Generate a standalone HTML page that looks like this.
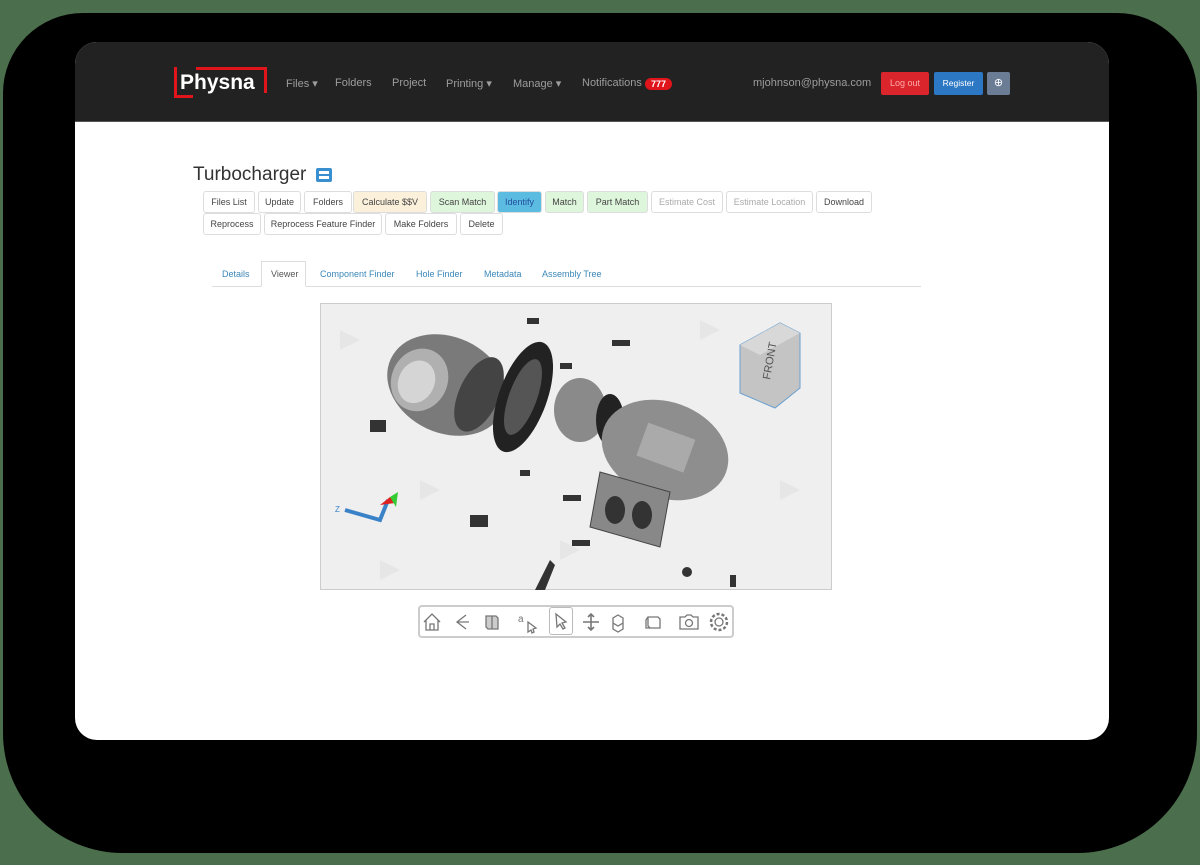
<!DOCTYPE html>
<html><head><meta charset="utf-8"><style>
*{margin:0;padding:0;box-sizing:border-box}
body{width:1200px;height:865px;background:#4b6f4c;position:relative;overflow:hidden;font-family:"Liberation Sans",sans-serif}
.frame{position:absolute;left:3px;top:13px;width:1194px;height:840px;background:#000;border-radius:80px 80px 120px 120px}
.card{position:absolute;left:75px;top:42px;width:1034px;height:698px;background:#fff;border-radius:22px;overflow:hidden}
.nav{position:absolute;left:0;top:0;width:100%;height:80px;background:#222;border-bottom:1px solid #555}
.nav .a{position:absolute;top:35px;color:#9d9d9d;font-size:11px}
.btn{position:absolute;height:22px;border:1px solid #ddd;border-radius:3px;font-size:9px;color:#444;line-height:20px;text-align:center;background:#fff;white-space:nowrap}
.tab{position:absolute;top:227px;font-size:9px;color:#3a87b8}
</style></head><body>
<div class="frame"></div>
<div class="card">
 <div class="nav">
  <div style="position:absolute;left:99px;top:25px;width:3px;height:31px;background:#e0141b"></div>
  <div style="position:absolute;left:99px;top:53px;width:19px;height:3px;background:#e0141b"></div>
  <div style="position:absolute;left:121px;top:25px;width:71px;height:3px;background:#e0141b"></div>
  <div style="position:absolute;left:189px;top:25px;width:3px;height:26px;background:#e0141b"></div>
  <div style="position:absolute;left:105px;top:29px;color:#fff;font-weight:bold;font-size:21px">Physna</div>
  <div class="a" style="left:211px">Files ▾</div>
  <div class="a" style="left:260px">Folders</div>
  <div class="a" style="left:317px">Project</div>
  <div class="a" style="left:371px">Printing ▾</div>
  <div class="a" style="left:438px">Manage ▾</div>
  <div class="a" style="left:507px">Notifications</div>
  <div style="position:absolute;left:570px;top:36px;width:27px;height:12px;background:#e0141b;border-radius:6px;color:#fff;font-size:9px;text-align:center;line-height:12px;font-weight:bold">777</div>
  <div class="a" style="left:678px;top:35px">mjohnson@physna.com</div>
  <div style="position:absolute;left:806px;top:30px;width:48px;height:23px;background:#d9252b;font-size:9px;text-align:center;line-height:23px;border-radius:2px;color:#faa">Log out</div>
  <div style="position:absolute;left:859px;top:30px;width:49px;height:23px;background:#2d78c4;color:#fff;font-size:8.5px;text-align:center;line-height:23px;border-radius:2px">Register</div>
  <div style="position:absolute;left:912px;top:30px;width:23px;height:23px;background:#6b7d95;border-radius:2px;color:#fff;font-size:11px;text-align:center;line-height:23px">⊕</div>
 </div>
 <div style="position:absolute;left:118px;top:122px;font-size:19px;color:#333">Turbocharger</div>
 <div style="position:absolute;left:241px;top:126px;width:16px;height:14px;background:#3a8fd0;border-radius:2px"><div style="margin:3px 3px;width:10px;height:3px;background:#fff"></div><div style="margin:-1px 3px;width:10px;height:3px;background:#fff"></div></div>
 <div class="btn" style="left:128px;top:149px;width:52px">Files List</div>
 <div class="btn" style="left:183px;top:149px;width:43px">Update</div>
 <div class="btn" style="left:229px;top:149px;width:48px">Folders</div>
 <div class="btn" style="left:278px;top:149px;width:74px;background:#fbf1db">Calculate $$V</div>
 <div class="btn" style="left:355px;top:149px;width:65px;background:#def6dc">Scan Match</div>
 <div class="btn" style="left:422px;top:149px;width:45px;background:#5bbbe0;color:#2250a0">Identify</div>
 <div class="btn" style="left:470px;top:149px;width:39px;background:#def6dc">Match</div>
 <div class="btn" style="left:512px;top:149px;width:61px;background:#def6dc">Part Match</div>
 <div class="btn" style="left:576px;top:149px;width:72px;color:#aaa">Estimate Cost</div>
 <div class="btn" style="left:651px;top:149px;width:87px;color:#aaa">Estimate Location</div>
 <div class="btn" style="left:741px;top:149px;width:56px">Download</div>
 <div class="btn" style="left:128px;top:171px;width:58px">Reprocess</div>
 <div class="btn" style="left:189px;top:171px;width:118px">Reprocess Feature Finder</div>
 <div class="btn" style="left:310px;top:171px;width:72px">Make Folders</div>
 <div class="btn" style="left:385px;top:171px;width:43px">Delete</div>
 <div style="position:absolute;left:137px;top:244px;width:709px;height:1px;background:#ddd"></div>
 <div style="position:absolute;left:186px;top:219px;width:45px;height:26px;border:1px solid #ddd;border-bottom-color:#fff;background:#fff"></div>
 <div class="tab" style="left:147px">Details</div>
 <div class="tab" style="left:196px;color:#555">Viewer</div>
 <div class="tab" style="left:245px">Component Finder</div>
 <div class="tab" style="left:341px">Hole Finder</div>
 <div class="tab" style="left:409px">Metadata</div>
 <div class="tab" style="left:467px">Assembly Tree</div>
</div>
<svg style="position:absolute;left:320px;top:303px" width="512" height="287" viewBox="320 303 512 287">
 <rect x="320.5" y="303.5" width="511" height="286" fill="#efefef" stroke="#ccc"/>
 <g fill="#e6e6e6"><path d="M340 330l20 10-20 10z M420 480l20 10-20 10z M700 320l20 10-20 10z M780 480l20 10-20 10z M380 560l20 10-20 10z M560 540l20 10-20 10z"/></g>
 <g transform="rotate(25 447 385)"><ellipse cx="447" cy="385" rx="62" ry="48" fill="#7a7a7a"/><ellipse cx="420" cy="392" rx="28" ry="32" fill="#b0b0b0"/><ellipse cx="418" cy="395" rx="18" ry="22" fill="#d5d5d5"/><ellipse cx="480" cy="380" rx="20" ry="40" fill="#444"/></g>
 <ellipse cx="523" cy="397" rx="24" ry="58" transform="rotate(20 523 397)" fill="#222"/>
 <ellipse cx="523" cy="397" rx="14" ry="40" transform="rotate(20 523 397)" fill="#555"/>
 <ellipse cx="580" cy="410" rx="26" ry="32" fill="#8a8a8a"/>
 <ellipse cx="610" cy="420" rx="14" ry="26" fill="#222"/>
 <g transform="rotate(20 665 450)"><ellipse cx="665" cy="450" rx="65" ry="48" fill="#8e8e8e"/><rect x="640" y="430" width="50" height="35" fill="#aaa"/></g>
 <path d="M600 472l70 20-10 55-70-20z" fill="#888" stroke="#444"/>
 <ellipse cx="615" cy="510" rx="10" ry="14" fill="#333"/><ellipse cx="642" cy="515" rx="10" ry="14" fill="#333"/>
 <g fill="#333"><rect x="527" y="318" width="12" height="6"/><rect x="612" y="340" width="18" height="6"/><rect x="560" y="363" width="12" height="6"/><rect x="520" y="470" width="10" height="6"/><rect x="563" y="495" width="18" height="6"/><rect x="572" y="540" width="18" height="6"/><rect x="470" y="515" width="18" height="12"/><rect x="370" y="420" width="16" height="12"/><path d="M535 590l15-30 5 5-10 25z"/><circle cx="687" cy="572" r="5"/><rect x="730" y="575" width="6" height="12"/></g>
 <path d="M740 345l40-22 20 10v55l-25 20-35-15z" fill="#c4c4c4" stroke="#6a9fcf"/>
 <path d="M740 345l40-22 20 10-40 22z" fill="#d8d8d8"/>
 <text x="770" y="380" font-size="11" fill="#555" transform="rotate(-80 770 380)">FRONT</text>
 <path d="M345 510l35 10 8-20" fill="none" stroke="#3a82c8" stroke-width="4"/>
 <path d="M380 505l10-8 5 6z" fill="#d22"/><path d="M390 497l8-5-2 15z" fill="#3c3"/>
 <text x="335" y="512" font-size="8" fill="#3a82c8">Z</text>
</svg>
<div style="position:absolute;left:418px;top:605px;width:316px;height:33px;border:2px solid #ccc;border-radius:4px;background:#fff"></div>
<div style="position:absolute;left:549px;top:607px;width:24px;height:28px;border:1px solid #bbb;border-radius:3px"></div>
<svg style="position:absolute;left:418px;top:605px" width="316" height="33" viewBox="0 0 316 33" fill="none" stroke="#777" stroke-width="1.3">
 <path d="M6 17l8-8 8 8M8 15v10h12V15M12 25v-6h4v6"/>
 <path d="M48 10l-9 7 9 7M39 17h12"/>
 <path d="M68 11h10l2 2v11H70l-2-2zM74 11v13" fill="#ccc"/>
 <text x="100" y="17" font-size="10" fill="#777" stroke="none">a</text><path d="M110 17l8 6-3 1 1 3-2 1-1-3-3 2z"/>
 <path d="M138 9l10 8-4 1 3 5-2 1-3-5-3 3z"/>
 <path d="M173 9v16M165 17h16M170 12l3-3 3 3M170 22l3 3 3-3" stroke-width="1.6"/>
 <path d="M200 10l5 3v5l-5 3-5-3v-5zM195 18l5 3 5-3v6l-5 3-5-3z"/>
 <path d="M230 12h10l2 2v9h-10l-2-2zM230 12l-2 3v8h4"/>
 <path d="M262 12h5l2-2h4l2 2h5v12h-18z"/><circle cx="271" cy="18" r="3.5"/>
 <circle cx="301" cy="17" r="4"/><circle cx="301" cy="17" r="8" stroke-dasharray="3 2" stroke-width="2.5"/>
</svg>
</body></html>
